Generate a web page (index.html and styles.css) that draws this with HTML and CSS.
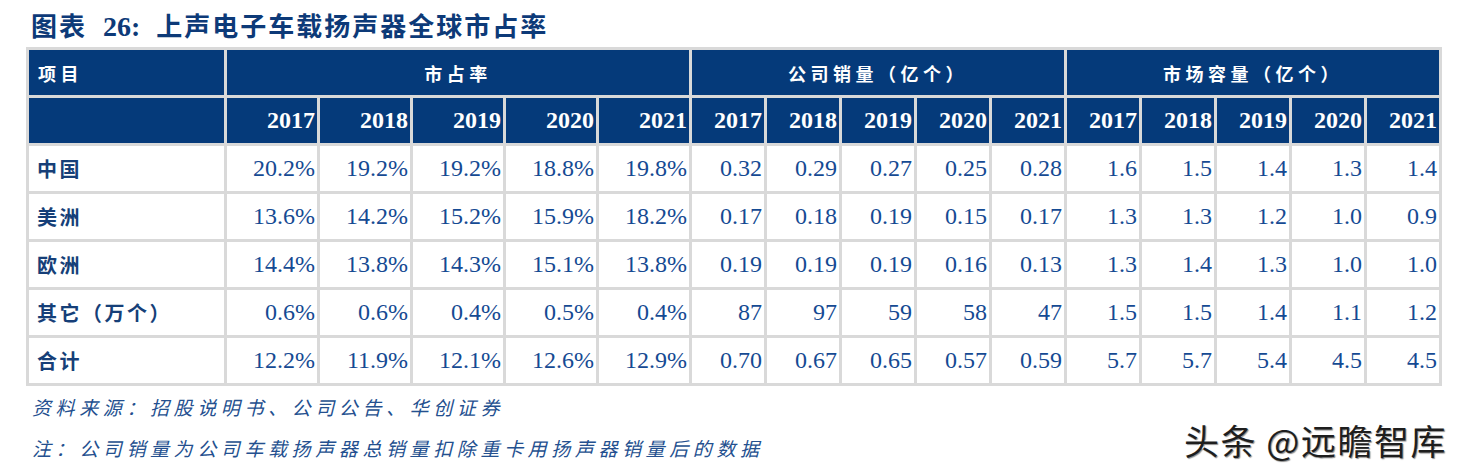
FILE: index.html
```html
<!DOCTYPE html>
<html lang="zh-CN">
<head>
<meta charset="utf-8">
<title>上声电子车载扬声器全球市占率</title>
<link rel="stylesheet" href="styles.css">
</head>
<body>
<div class="page">
  <h1 class="title"><span class="cn">图表</span><span class="num">26:</span><span class="cn">上声电子车载扬声器全球市占率</span></h1>
  <table class="data">
    <colgroup>
      <col class="c-label">
      <col class="c-ms"><col class="c-ms"><col class="c-ms"><col class="c-ms"><col class="c-ms">
      <col class="c-n"><col class="c-n"><col class="c-n"><col class="c-n"><col class="c-n">
      <col class="c-n"><col class="c-n"><col class="c-n"><col class="c-n"><col class="c-n last">
    </colgroup>
    <thead>
      <tr class="h1">
        <th class="lab">项目</th>
        <th colspan="5" class="grp">市占率</th>
        <th colspan="5" class="grp">公司销量（亿个）</th>
        <th colspan="5" class="grp">市场容量（亿个）</th>
      </tr>
      <tr class="h2">
        <th class="lab"></th>
        <th>2017</th><th>2018</th><th>2019</th><th>2020</th><th>2021</th>
        <th>2017</th><th>2018</th><th>2019</th><th>2020</th><th>2021</th>
        <th>2017</th><th>2018</th><th>2019</th><th>2020</th><th>2021</th>
      </tr>
    </thead>
    <tbody>
      <tr><td class="lab">中国</td><td>20.2%</td><td>19.2%</td><td>19.2%</td><td>18.8%</td><td>19.8%</td><td>0.32</td><td>0.29</td><td>0.27</td><td>0.25</td><td>0.28</td><td>1.6</td><td>1.5</td><td>1.4</td><td>1.3</td><td>1.4</td></tr>
      <tr><td class="lab">美洲</td><td>13.6%</td><td>14.2%</td><td>15.2%</td><td>15.9%</td><td>18.2%</td><td>0.17</td><td>0.18</td><td>0.19</td><td>0.15</td><td>0.17</td><td>1.3</td><td>1.3</td><td>1.2</td><td>1.0</td><td>0.9</td></tr>
      <tr><td class="lab">欧洲</td><td>14.4%</td><td>13.8%</td><td>14.3%</td><td>15.1%</td><td>13.8%</td><td>0.19</td><td>0.19</td><td>0.19</td><td>0.16</td><td>0.13</td><td>1.3</td><td>1.4</td><td>1.3</td><td>1.0</td><td>1.0</td></tr>
      <tr><td class="lab">其它（万个）</td><td>0.6%</td><td>0.6%</td><td>0.4%</td><td>0.5%</td><td>0.4%</td><td>87</td><td>97</td><td>59</td><td>58</td><td>47</td><td>1.5</td><td>1.5</td><td>1.4</td><td>1.1</td><td>1.2</td></tr>
      <tr><td class="lab">合计</td><td>12.2%</td><td>11.9%</td><td>12.1%</td><td>12.6%</td><td>12.9%</td><td>0.70</td><td>0.67</td><td>0.65</td><td>0.57</td><td>0.59</td><td>5.7</td><td>5.7</td><td>5.4</td><td>4.5</td><td>4.5</td></tr>
    </tbody>
  </table>
  <div class="notes">
    <p class="note">资料来源：招股说明书、公司公告、华创证券</p>
    <p class="note">注：公司销量为公司车载扬声器总销量扣除重卡用扬声器销量后的数据</p>
  </div>
  <div class="watermark">头条 @远瞻智库</div>
</div>
</body>
</html>
```
FILE: styles.css
```css
html, body {
  margin: 0;
  padding: 0;
  background: #ffffff;
}

.page {
  position: relative;
  width: 1468px;
  height: 475px;
  overflow: hidden;
}

.title {
  margin: 0;
  height: 47px;
  box-sizing: border-box;
  padding: 7px 0 0 31px;
  line-height: 36px;
  font-size: 26px;
  font-weight: 700;
  color: #0d3a78;
  white-space: nowrap;
}

.title .cn {
  font-family: "Noto Sans CJK SC", sans-serif;
  letter-spacing: 2px;
}

.title .num {
  font-family: "Liberation Serif", serif;
  font-size: 28px;
  margin: 0 16px 0 16px;
}

.data {
  margin-left: 26px;
  border-collapse: separate;
  border-spacing: 3px;
  background: #d9d9d9;
  table-layout: fixed;
  width: 1414px;
}

.c-label { width: 195px; }
.c-ms { width: 90px; }
.c-n { width: 72px; }

.data th,
.data td {
  padding: 0 2px 0 0;
  height: 45px;
  box-sizing: border-box;
  text-align: right;
  white-space: nowrap;
  overflow: hidden;
}

.data thead th {
  background: #053a7a;
  color: #ffffff;
}

.h1 th {
  font-family: "Noto Sans CJK SC", sans-serif;
  font-size: 18px;
  font-weight: 700;
  letter-spacing: 4.5px;
}

.h1 th.grp {
  text-align: center;
  padding: 0;
}

.h2 th {
  font-family: "Liberation Serif", serif;
  font-size: 24px;
  font-weight: 700;
}

.data th.lab,
.data td.lab {
  text-align: left;
  padding-left: 9px;
}

.data td {
  background: #ffffff;
  font-family: "Liberation Serif", serif;
  font-size: 24px;
  color: #154a93;
}

.data td.lab {
  font-family: "Noto Sans CJK SC", sans-serif;
  font-size: 20px;
  font-weight: 700;
  color: #163f78;
  letter-spacing: 2.5px;
  padding-left: 8px;
}

.notes {
  padding-left: 32px;
}

.note {
  margin: 0;
  height: 41px;
  line-height: 41px;
  font-family: "Noto Sans CJK SC", sans-serif;
  font-style: italic;
  font-size: 19px;
  letter-spacing: 4.6px;
  color: #24508f;
  white-space: nowrap;
}

.watermark {
  position: absolute;
  left: 1184px;
  top: 417px;
  font-family: "Noto Sans CJK SC", sans-serif;
  font-size: 35px;
  letter-spacing: 1.5px;
  line-height: 46px;
  color: #1e1e1e;
  white-space: nowrap;
  text-shadow: -1px -1px 0 #ffffff, 1px 1px 1px rgba(0, 0, 0, 0.45);
}
```
